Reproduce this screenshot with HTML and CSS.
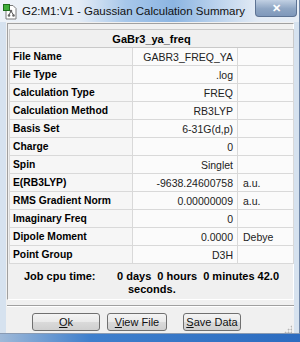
FILE: index.html
```html
<!DOCTYPE html>
<html lang="en">
<head>
<meta charset="UTF-8" />
<title>G2:M1:V1 - Gaussian Calculation Summary</title>
<link rel="stylesheet" href="styles.css">
</head>
<body>

<div class="window">
  <div class="titlebar">
    <svg class="app-icon" width="15" height="16" viewBox="0 0 15 16">
      <path d="M3 1.5h7l3 3v10.5h-10z" fill="#fff" stroke="#7a7a7a" />
      <rect x="0.5" y="0.5" width="6" height="6" fill="#3fae3a" stroke="#1f6e1c" />
      <line x1="8" y1="7" x2="6" y2="11" stroke="#555" />
      <line x1="8" y1="7" x2="10.5" y2="11" stroke="#555" />
      <circle cx="8" cy="7" r="1.3" fill="#666" />
      <circle cx="6" cy="11.5" r="1.3" fill="#666" />
      <circle cx="10.5" cy="11.5" r="1.3" fill="#666" />
    </svg>
    <span class="title">G2:M1:V1 - Gaussian Calculation Summary</span>
    <div class="close-btn">&#x2715;</div>
  </div>

  <div class="client">
    <div class="summary">
      <table class="summary-table">
        <colgroup>
          <col class="col-label">
          <col class="col-value">
          <col class="col-unit">
        </colgroup>
        <tr><th colspan="3">GaBr3_ya_freq</th></tr>
        <tr><td class="label">File Name</td><td class="value">GABR3_FREQ_YA</td><td class="unit"></td></tr>
        <tr><td class="label">File Type</td><td class="value">.log</td><td class="unit"></td></tr>
        <tr><td class="label">Calculation Type</td><td class="value">FREQ</td><td class="unit"></td></tr>
        <tr><td class="label">Calculation Method</td><td class="value">RB3LYP</td><td class="unit"></td></tr>
        <tr><td class="label">Basis Set</td><td class="value">6-31G(d,p)</td><td class="unit"></td></tr>
        <tr><td class="label">Charge</td><td class="value">0</td><td class="unit"></td></tr>
        <tr><td class="label">Spin</td><td class="value">Singlet</td><td class="unit"></td></tr>
        <tr><td class="label">E(RB3LYP)</td><td class="value">-9638.24600758</td><td class="unit">a.u.</td></tr>
        <tr><td class="label">RMS Gradient Norm</td><td class="value">0.00000009</td><td class="unit">a.u.</td></tr>
        <tr><td class="label">Imaginary Freq</td><td class="value">0</td><td class="unit"></td></tr>
        <tr><td class="label">Dipole Moment</td><td class="value">0.0000</td><td class="unit">Debye</td></tr>
        <tr><td class="label">Point Group</td><td class="value">D3H</td><td class="unit"></td></tr>
      </table>
      <div class="cpu-time">
        <div class="cpu-label">Job cpu time:</div>
        <div class="cpu-value">
          <div>0 days&nbsp; 0 hours&nbsp; 0 minutes 42.0</div>
          <div class="cpu-seconds">seconds.</div>
        </div>
      </div>
    </div>

    <div class="separator"></div>

    <div class="buttons">
      <button class="btn btn-ok"><u>O</u>k</button>
      <button class="btn btn-view"><u>V</u>iew File</button>
      <button class="btn btn-save"><u>S</u>ave Data</button>
      <div class="grip"></div>
    </div>
  </div>
</div>

</body>
</html>
```

FILE: styles.css
```css
body {
  margin: 0;
  width: 300px;
  height: 342px;
  overflow: hidden;
  background: linear-gradient(90deg, #9fb9d8 0%, #3f7fcc 30%, #2c6cc0 100%);
  font-family: "Liberation Sans", Arial, sans-serif;
  color: #000;
}
.window {
  height: 334px;
  display: flex;
  flex-direction: column;
  background: #d6e2ef;
  border-right: 1px solid #6f86a6;
  border-bottom: 1px solid #8a9bb3;
  box-sizing: border-box;
}
.titlebar {
  height: 22px;
  display: flex;
  align-items: center;
  padding-left: 3px;
  background: linear-gradient(90deg, #edf2f8 0%, #e6edf6 26%, #a7c7ea 42%, #8cb5e2 58%, #b9d1ec 72%, #e3ebf5 86%, #e8eef6 100%);
}
.app-icon {
  margin-top: 1px;
}
.title {
  margin-left: 4px;
  font-size: 11.5px;
  color: #111;
  white-space: nowrap;
}
.close-btn {
  margin-left: auto;
  align-self: flex-start;
  width: 42px;
  height: 17px;
  margin-right: 2px;
  box-sizing: border-box;
  border: 1px solid #5d7394;
  border-top: none;
  border-radius: 0 0 4px 4px;
  background: linear-gradient(#c1d0e3, #8ea5c3 55%, #7f98bb);
  color: #fff;
  font-size: 11px;
  font-weight: 700;
  text-align: center;
  line-height: 16px;
}
.client {
  flex: 1;
  margin: 0 5px 0 6px;
  padding: 1px 0 0 1px;
  background: #f0f0f0;
  display: flex;
  flex-direction: column;
}
.summary {
  height: 277px;
  box-sizing: border-box;
  padding: 5px 1px 0 1px;
  border: 1px solid #a0a0a0;
  border-right-color: #fff;
  border-bottom-color: #fff;
  display: flex;
  flex-direction: column;
}
.summary-table {
  width: 285px;
  border-collapse: collapse;
  table-layout: fixed;
  background: #fbfbfb;
  font-size: 10.5px;
}
.col-label {
  width: 123px;
}
.col-value {
  width: 105px;
}
.summary-table th,
.summary-table td {
  height: 17px;
  padding: 0;
  border: 1px solid #d9d9d9;
  white-space: nowrap;
  overflow: hidden;
}
.summary-table th {
  background: #f0f0f0;
  border-color: #c9c9c9;
  font-weight: 700;
  font-size: 11px;
  text-align: center;
}
.summary-table .label {
  padding-left: 3px;
  font-size: 10.3px;
  font-weight: 700;
  background: #f6f6f6;
}
.summary-table .value {
  padding-right: 4px;
  text-align: right;
  color: #222;
}
.summary-table .unit {
  padding-left: 5px;
  color: #222;
}
.cpu-time {
  flex: 1;
  display: flex;
  padding-top: 6px;
  font-size: 11px;
  font-weight: 700;
}
.cpu-label {
  width: 93px;
  padding-left: 15px;
}
.cpu-value {
  line-height: 13px;
}
.cpu-seconds {
  padding-left: 11px;
}
.separator {
  margin-top: 5px;
  height: 1px;
  border-top: 1px solid #a0a0a0;
  background: #fff;
}
.buttons {
  position: relative;
  display: flex;
  margin-top: 6px;
}
.btn {
  height: 18px;
  padding: 0;
  border: 1px solid #707070;
  border-radius: 3px;
  background: linear-gradient(#f4f4f4, #e9e9e9 50%, #dadada 51%, #cfcfcf);
  font-family: "Liberation Sans", Arial, sans-serif;
  font-size: 11px;
  color: #111;
}
.btn-ok {
  width: 68px;
  margin-left: 25px;
}
.btn-view {
  width: 60px;
  margin-left: 7px;
}
.btn-save {
  width: 58px;
  margin-left: 16px;
}
.grip {
  position: absolute;
  right: 2px;
  bottom: -2px;
  width: 8px;
  height: 8px;
  background: radial-gradient(circle, #b5b5b5 0.8px, transparent 1.2px) 0 0 / 3px 3px;
  clip-path: polygon(100% 0, 100% 100%, 0 100%);
}
```
